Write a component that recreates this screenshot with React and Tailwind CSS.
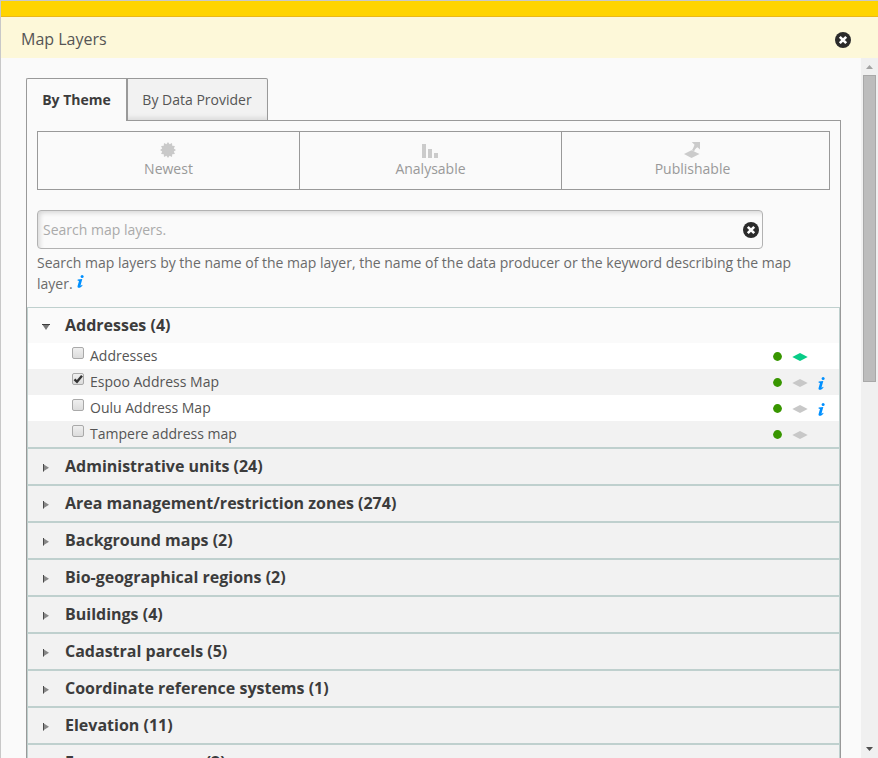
import React from "react";

const layers = [
  { name: "Addresses", checked: false, published: true, info: false },
  { name: "Espoo Address Map", checked: true, published: false, info: true },
  { name: "Oulu Address Map", checked: false, published: false, info: true },
  { name: "Tampere address map", checked: false, published: false, info: false },
];

const groups = [
  "Administrative units (24)",
  "Area management/restriction zones (274)",
  "Background maps (2)",
  "Bio-geographical regions (2)",
  "Buildings (4)",
  "Cadastral parcels (5)",
  "Coordinate reference systems (1)",
  "Elevation (11)",
  "Energy resources (2)",
];

function CloseIcon() {
  return (
    <svg width="16" height="16" viewBox="0 0 16 16" className="block shrink-0">
      <circle cx="8" cy="8" r="8" fill="#2b2b2b" />
      <path d="M4.800 4.800L11.200 11.200M11.200 4.800L4.800 11.200" stroke="#fff" strokeWidth="2.600" />
    </svg>
  );
}

function NewestIcon() {
  const points = Array.from({ length: 24 }, (_, i) => {
    const r = i % 2 === 0 ? 8 : 6;
    const a = (i * Math.PI) / 12 - Math.PI / 2;
    return `${8 + r * Math.cos(a)},${8 + r * Math.sin(a)}`;
  }).join(" ");
  return (
    <svg width="16" height="16" viewBox="0 0 16 16">
      <polygon points={points} fill="#c9c9c9" />
    </svg>
  );
}

function AnalysableIcon() {
  return (
    <svg width="16" height="16" viewBox="0 0 16 16" fill="#cbcbcb">
      <rect x="0" y="2" width="4" height="14" />
      <rect x="6" y="7" width="4" height="9" />
      <rect x="12" y="11" width="4" height="5" />
    </svg>
  );
}

function PublishableIcon() {
  return (
    <svg width="16" height="16" viewBox="0 0 16 16" fill="#cbcbcb">
      <path d="M0 12L7.500 8.300L15.500 12L7.500 16Z" />
      <path d="M7.800 0H16V7.500L13.500 5.300C11.800 6.300 10.600 7.300 10.300 9.300L7.800 8.300C9.300 6.500 9.800 4.500 10.500 2.700Z" />
    </svg>
  );
}

function InfoIcon({ className = "" }) {
  return (
    <svg width="7" height="13" viewBox="0 0 7 13" className={`inline-block ${className}`} fill="#0090ff">
      <circle cx="5.100" cy="1.500" r="1.500" />
      <path d="M0.700 4.600L5.300 4L3.600 10.300C3.500 11 3.900 10.900 5 9.700L5.600 10.200C4.200 12.200 3.100 12.800 1.900 12.800C0.700 12.800 0.300 12 0.600 10.900L2 5.900L0.500 5.500Z" />
    </svg>
  );
}

function Checkbox({ checked }) {
  return (
    <span className="relative block size-3 rounded-[2px] border border-[#a9a9a9] bg-linear-to-b from-[#efefef] to-[#dcdcdc]">
      {checked && (
        <svg width="12" height="12" viewBox="0 0 12 12" className="absolute -top-px -left-px">
          <path d="M2.500 6.300L5 8.800L10 2.800" fill="none" stroke="#333" strokeWidth="2.400" />
        </svg>
      )}
    </span>
  );
}

function LayerRow({ layer }) {
  return (
    <div className="flex h-[26px] items-center pr-[14px] pl-11 odd:bg-white even:bg-[#f2f2f2]">
      <div className="-mt-[7px]">
        <Checkbox checked={layer.checked} />
      </div>
      <span className="ml-1.5 flex-1 text-[14px] leading-[26px] text-[#555]">{layer.name}</span>
      <svg width="9" height="9" viewBox="0 0 9 9" className="mt-px">
        <circle cx="4.500" cy="4.500" r="4.400" fill="#389600" />
      </svg>
      <svg width="16" height="8" viewBox="0 0 16 8" className="mt-[2px] ml-2.5">
        <path d="M0.300 4L8 0L15.700 4L8 8Z" fill={layer.published ? "#08cc87" : "#c8c8c8"} />
      </svg>
      <span className="ml-2.5 flex w-[7px] pt-[3px]">{layer.info && <InfoIcon />}</span>
    </div>
  );
}

function GroupHeader({ title, open }) {
  return (
    <div className={open ? "flex h-[35px] items-center bg-[#fafafa]" : "flex h-[35px] items-center bg-[#f2f2f2]"}>
      <svg width="9" height="9" viewBox="0 0 9 9" className={open ? "mt-[3px] ml-[14px]" : "mt-px ml-[14px]"}>
        {open ? (
          <>
            <path d="M0 1H8L4 7Z" fill="#777" />
            <path d="M0 1.500H8" stroke="#3c3c3c" />
          </>
        ) : (
          <>
            <path d="M1 1L7 4.800L1 8.600Z" fill="#888" />
            <path d="M1.500 1V8.500" stroke="#4a4a4a" />
          </>
        )}
      </svg>
      <h3 className="ml-3.5 text-[16px] leading-[35px] font-bold text-[#3c3c3c]">{title}</h3>
    </div>
  );
}

function FilterButton({ icon, label, className }) {
  return (
    <button className={`flex flex-col items-center pt-[10px] text-[14px] leading-[20px] text-[#999] ${className}`}>
      <span className="flex pr-px">{icon}</span>
      <span className="mt-[1px]">{label}</span>
    </button>
  );
}

export default function App() {
  return (
    <div className="flex h-[758px] w-[878px] flex-col overflow-hidden border-t border-l border-[#c8c8c8] bg-[#fafafa] font-['Open_Sans',sans-serif] text-[#3c3c3c]">
      <div className="h-4 shrink-0 border-b border-[#ebb819] bg-[#ffd400]" />
      <header className="flex h-[41px] shrink-0 items-center justify-between bg-[#fdf8d9] pr-[27px] pl-5">
        <h1 className="pt-0.5 text-[16px] leading-6 text-[#555]">Map Layers</h1>
        <div className="pt-[5px]"><CloseIcon /></div>
      </header>
      <div className="flex min-h-0 flex-1">
        <main className="min-w-0 flex-1 overflow-hidden pt-5 pr-5 pl-[25px]">
          <div className="flex h-[42px] text-[14px]">
            <div className="relative z-10 -mb-px flex h-[43px] w-[100px] items-center justify-center rounded-tl-[2px] border-t border-l border-[#999] bg-[#fafafa] pb-px font-bold">
              By Theme
            </div>
            <div className="flex h-[43px] w-[142px] items-center justify-center rounded-tr-[2px] border border-l-2 border-[#999] bg-[#f2f2f2] pr-px pb-px text-[#555] shadow-[inset_0_-5px_5px_-3px_#d8d8d8]">
              By Data Provider
            </div>
          </div>
          <section className="border border-[#999]">
            <div className="mx-2.5 mt-2.5 flex h-[59px] border border-[#999]">
              <FilterButton icon={<NewestIcon />} label="Newest" className="w-[262px] border-r border-[#999]" />
              <FilterButton icon={<AnalysableIcon />} label="Analysable" className="w-[262px] border-r border-[#999]" />
              <FilterButton icon={<PublishableIcon />} label="Publishable" className="w-[261px]" />
            </div>
            <div className="mt-5 ml-2.5 flex h-[39px] w-[726px] items-center justify-between rounded-[4px] border border-[#b2b2b2] pr-[3px] pl-[5px] text-[14px] text-[#aaa] shadow-[inset_3px_3px_4px_-1px_#d8d8d8]">
              <span>Search map layers.</span>
              <CloseIcon />
            </div>
            <p className="mt-[3px] ml-2.5 h-[55px] w-[770px] text-[14px] leading-[21px] text-[#6b6b6b]">
              Search map layers by the name of the map layer, the name of the data producer or the keyword describing the map layer. <InfoIcon className="mb-[7px] ml-px" />
            </p>
            <div>
              <div className="border border-[#bfd0ce]">
                <GroupHeader title="Addresses (4)" open />
                <div>
                  {layers.map((layer) => (
                    <LayerRow key={layer.name} layer={layer} />
                  ))}
                </div>
              </div>
              {groups.map((title) => (
                <div key={title} className="border border-[#bfd0ce]">
                  <GroupHeader title={title} />
                </div>
              ))}
            </div>
          </section>
        </main>
        <div className="flex w-[17px] shrink-0 flex-col items-center bg-[#f0f0f0]">
          <svg width="17" height="17" viewBox="0 0 17 17" className="shrink-0">
            <path d="M5 11L8.500 7L12 11Z" fill="#a3a3a3" />
          </svg>
          <div className="h-[307px] w-[13px] shrink-0 border border-[#a8a8a8] bg-[#bcbcbc]" />
          <div className="flex-1" />
          <svg width="17" height="17" viewBox="0 0 17 17" className="shrink-0">
            <path d="M5 6L12 6L8.500 10Z" fill="#505050" />
          </svg>
        </div>
      </div>
    </div>
  );
}
